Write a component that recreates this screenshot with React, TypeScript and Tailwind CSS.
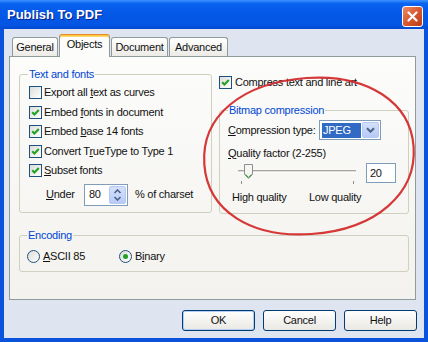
import React from "react";

const Check = ({ checked }: { checked: boolean }) => (
  <span className="w-[13px] h-[13px] shrink-0 border border-[#1c5180] bg-linear-to-br from-[#dcdcd7] to-white flex items-center justify-center">
    {checked && (
      <svg width="11" height="11" viewBox="0 0 11 11">
        <path d="M2.2 5.2 L4.4 7.5 L8.8 3" stroke="#21a121" strokeWidth="2" fill="none" />
      </svg>
    )}
  </span>
);

const Radio = ({ checked }: { checked: boolean }) => (
  <span className="w-[13px] h-[13px] shrink-0 rounded-full border border-[#1c5180] bg-linear-to-br from-[#dcdcd7] to-white flex items-center justify-center">
    {checked && <span className="w-[5px] h-[5px] rounded-full bg-[#21a121]" />}
  </span>
);

const CheckRow = ({ checked, children }: { checked: boolean; children: React.ReactNode }) => (
  <div className="flex items-center h-[19.5px] pl-[1px] gap-[2px]">
    <Check checked={checked} />
    <span className="whitespace-nowrap">{children}</span>
  </div>
);

const Tab = ({ w, children }: { w: string; children: React.ReactNode }) => (
  <div
    className={`${w} h-[19px] border border-b-0 border-[#919b9c] rounded-t-[3px] bg-linear-to-b from-white to-[#ecebe6] flex items-center justify-center`}
  >
    {children}
  </div>
);

const Btn = ({ children, def }: { children: React.ReactNode; def?: boolean }) => (
  <div
    className={`w-[73px] h-[21px] rounded-[3px] border border-[#003c74] bg-linear-to-b from-white to-[#e9e8e2] flex items-center justify-center ${
      def ? "shadow-[inset_0_0_0_1px_#b4cdf5]" : ""
    }`}
  >
    {children}
  </div>
);

export default function App() {
  return (
    <div className="w-[428px] h-[342px] relative overflow-hidden bg-[#0b52dc] flex flex-col font-['Liberation_Sans',Arial,sans-serif] text-[11px] leading-[13px] tracking-[-0.25px] text-[#111]">
      {/* Title bar */}
      <div className="h-[29px] shrink-0 flex items-center justify-between pl-[7px] pr-[5px] bg-[linear-gradient(to_bottom,#3d95ff_0%,#0a62f0_12%,#0358e6_50%,#0456e3_85%,#0349d2_100%)]">
        <span className="text-white font-bold text-[13px] leading-[16px] tracking-normal mt-[1px] [text-shadow:1px_1px_0_#0a1f8a]">
          Publish To PDF
        </span>
        <div className="w-[21px] h-[21px] mt-[3px] rounded-[3px] border border-white bg-linear-to-br from-[#ec8a68] via-[#d9582f] to-[#bb3b15] flex items-center justify-center">
          <svg width="11" height="11" viewBox="0 0 11 11">
            <path d="M1.5 1.5 L9.5 9.5 M9.5 1.5 L1.5 9.5" stroke="white" strokeWidth="2.2" strokeLinecap="round" />
          </svg>
        </div>
      </div>

      {/* Client area */}
      <div className="flex-1 mx-[4px] mb-[4px] bg-[#dfe4f1] flex flex-col pt-[5px] pl-[5px] pr-[8px]">
        {/* Tabs */}
        <div className="h-[22px] flex items-end pl-[3px] gap-[1px]">
          <Tab w="w-[46px]">General</Tab>
          <div className="w-[51px] h-[23px] -mb-px relative z-10 border border-b-0 border-[#919b9c] border-t-[#e68b2c] rounded-t-[3px] bg-[#fcfcfb] shadow-[inset_0_1px_0_#ffc73c,inset_0_2px_0_#ffd874] flex items-center justify-center pb-[3px]">
            Objects
          </div>
          <Tab w="w-[57px]">Document</Tab>
          <Tab w="w-[59px]">Advanced</Tab>
        </div>

        {/* Panel */}
        <div className="h-[244px] border border-[#919b9c] bg-linear-to-b from-[#fcfcfb] to-[#f3f2ee] pt-[11px] pl-[9px] pr-[6px] flex flex-col">
          <div className="flex items-start gap-[7px]">
            {/* Text and fonts */}
            <fieldset className="w-[193px] border border-[#d0d0bf] rounded-[3px] px-[8px] pt-[2px] pb-[5px]">
              <legend className="px-[1px] text-[#0046d5]">Text and fonts</legend>
              <CheckRow checked={false}>
                Export all <u className="underline-offset-[1px]">t</u>ext as curves
              </CheckRow>
              <CheckRow checked>
                Embed <u className="underline-offset-[1px]">f</u>onts in document
              </CheckRow>
              <CheckRow checked>
                Embed <u className="underline-offset-[1px]">b</u>ase 14 fonts
              </CheckRow>
              <CheckRow checked>
                Convert T<u className="underline-offset-[1px]">r</u>ueType to Type 1
              </CheckRow>
              <CheckRow checked>
                <u className="underline-offset-[1px]">S</u>ubset fonts
              </CheckRow>
              <div className="flex items-center h-[24px] mt-[2px] pl-[18px]">
                <span className="w-[38px]">
                  <u className="underline-offset-[1px]">U</u>nder
                </span>
                <div className="w-[44px] h-[22px] border border-[#7f9db9] bg-white flex items-center pl-[4px] pr-[1px]">
                  <span>80</span>
                  <div className="ml-auto w-[17px] h-[18px] rounded-[2px] bg-linear-to-b from-[#d4e1fc] to-[#b8cbf7] border border-[#b6c9f4] flex flex-col items-center justify-center gap-[2px]">
                    <svg width="9" height="5" viewBox="0 0 9 5">
                      <path d="M1.5 4 L4.5 1 L7.5 4" stroke="#4d6185" strokeWidth="1.6" fill="none" />
                    </svg>
                    <svg width="9" height="5" viewBox="0 0 9 5">
                      <path d="M1.5 1 L4.5 4 L7.5 1" stroke="#4d6185" strokeWidth="1.6" fill="none" />
                    </svg>
                  </div>
                </div>
                <span className="ml-[7px] whitespace-nowrap">% of charset</span>
              </div>
            </fieldset>

            {/* Right column */}
            <div className="w-[190px] flex flex-col">
              <div className="flex items-center h-[18px] mt-[5px] gap-[3px]">
                <Check checked />
                <span className="whitespace-nowrap">Compress text and line art</span>
              </div>
              <fieldset className="mt-[13px] border border-[#d0d0bf] rounded-[3px] px-[8px] pt-[3px] pb-[9px]">
                <legend className="px-[1px] text-[#0046d5]">Bitmap compression</legend>
                <div className="flex items-center h-[20px]">
                  <span className="w-[91px] whitespace-nowrap">
                    <u className="underline-offset-[1px]">C</u>ompression type:
                  </span>
                  <div className="w-[62px] h-[20px] border border-[#7f9db9] bg-white flex items-center p-[1px]">
                    <div className="ml-[1px] w-[39px] h-[15px] bg-[#316ac5] text-white flex items-center pl-[1px]">
                      JPEG
                    </div>
                    <div className="ml-auto w-[17px] h-full rounded-[2px] bg-linear-to-b from-[#d4e1fc] to-[#b5c9f7] border border-[#b6c9f4] flex items-center justify-center">
                      <svg width="9" height="6" viewBox="0 0 9 6">
                        <path d="M1 1.2 L4.5 4.7 L8 1.2" stroke="#4d6185" strokeWidth="2" fill="none" />
                      </svg>
                    </div>
                  </div>
                </div>
                <div className="flex items-center h-[16px] mt-[5px]">
                  <span className="whitespace-nowrap">
                    <u className="underline-offset-[1px]">Q</u>uality factor (2-255)
                  </span>
                </div>
                <div className="flex items-center h-[24px]">
                  <svg width="132" height="24" viewBox="0 0 132 24" className="shrink-0">
                    <rect x="10" y="9" width="118" height="1" fill="#a8a7a2" />
                    <rect x="10" y="10" width="118" height="1" fill="#dcdbd6" />
                    <rect x="10" y="11" width="118" height="1" fill="#ffffff" />
                    <path d="M16.5 3.5 H24.5 V13.5 L20.5 17.5 L16.5 13.5 Z" fill="#f6f6f2" stroke="#8e8f8f" strokeWidth="1" />
                    <path d="M17.5 13.5 L20.5 16.3 L23.5 13.5" stroke="#21a121" strokeWidth="1" fill="none" />
                    <rect x="13" y="20" width="1" height="3" fill="#8e8f8f" />
                    <rect x="125" y="20" width="1" height="3" fill="#8e8f8f" />
                  </svg>
                  <div className="ml-[6px] w-[30px] h-[20px] border border-[#7f9db9] bg-white flex items-center pl-[3px]">
                    20
                  </div>
                </div>
                <div className="flex items-center h-[14px] mt-[5px] pl-[4px]">
                  <span className="w-[77px] whitespace-nowrap">High quality</span>
                  <span className="whitespace-nowrap">Low quality</span>
                </div>
              </fieldset>
            </div>
          </div>

          {/* Encoding */}
          <fieldset className="mt-[15px] w-[390px] border border-[#d0d0bf] rounded-[3px] px-[7px] pt-[6px] pb-[7px]">
            <legend className="px-[1px] text-[#0046d5]">Encoding</legend>
            <div className="flex items-center h-[16px]">
              <div className="w-[92px] flex items-center gap-[3px]">
                <Radio checked={false} />
                <span>
                  <u className="underline-offset-[1px]">A</u>SCII 85
                </span>
              </div>
              <div className="flex items-center gap-[3px]">
                <Radio checked />
                <span>
                  B<u className="underline-offset-[1px]">i</u>nary
                </span>
              </div>
            </div>
          </fieldset>
        </div>

        {/* Buttons */}
        <div className="flex justify-end gap-[8px] mt-[10px] -mr-[1px]">
          <Btn def>OK</Btn>
          <Btn>Cancel</Btn>
          <Btn>Help</Btn>
        </div>
      </div>

      {/* Red annotation ellipse */}
      <svg className="absolute inset-0 pointer-events-none" width="428" height="342" viewBox="0 0 428 342">
        <path
          d="M 204 157 C 204 108, 248 78, 312 78 C 374 78, 414 110, 414 154 C 414 200, 372 234, 306 234 C 246 234, 204 204, 204 157 Z"
          transform="rotate(-4 309 156)"
          stroke="#d12727"
          strokeWidth="2.2"
          fill="none"
          opacity="0.92"
        />
      </svg>
    </div>
  );
}
